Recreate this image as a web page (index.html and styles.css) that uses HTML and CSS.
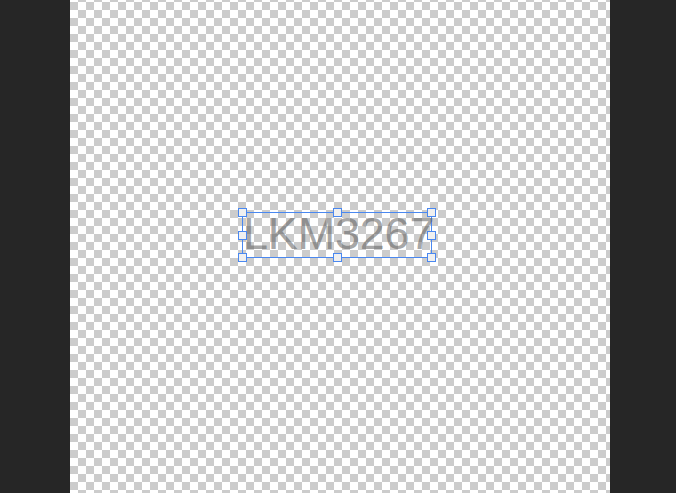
FILE: index.html
```html
<!DOCTYPE html>
<html>
<head>
    <meta charset="UTF-8">
    <meta name="viewport" content="width=device-width, initial-scale=1.0">
    <title>Canvas</title>
    <link rel="stylesheet" href="styles.css">
</head>
<body>
    <div class="workspace">
        <div class="side side-left"></div>
        <div class="canvas">
            <div class="layer">
                <span class="layer-text">LKM3267</span>
                <div class="handle h-tl"></div>
                <div class="handle h-tm"></div>
                <div class="handle h-tr"></div>
                <div class="handle h-ml"></div>
                <div class="handle h-mr"></div>
                <div class="handle h-bl"></div>
                <div class="handle h-bm"></div>
                <div class="handle h-br"></div>
            </div>
        </div>
        <div class="side side-right"></div>
    </div>
</body>
</html>
```

FILE: styles.css
```css
html, body {
    margin: 0;
    padding: 0;
    height: 100%;
    background: #262626;
    overflow: hidden;
}
.workspace {
    display: flex;
    height: 493px;
}
.side-left {
    width: 70px;
    flex-shrink: 0;
}
.side-right {
    flex: 1;
}
.canvas {
    position: relative;
    width: 540px;
    flex-shrink: 0;
    background: repeating-conic-gradient(#cccccc 0 25%, #ffffff 0 50%) 8px 2px / 16px 16px;
}
.layer {
    position: absolute;
    left: 172px;
    top: 212px;
    width: 190px;
    height: 46px;
    border: 1px solid #4a88f0;
    box-sizing: border-box;
}
.layer-text {
    display: block;
    font-family: "Liberation Sans", Arial, sans-serif;
    font-size: 45px;
    line-height: 42px;
    color: rgba(90, 90, 90, 0.55);
    white-space: nowrap;
    letter-spacing: -0.2px;
}
.handle {
    position: absolute;
    width: 9px;
    height: 9px;
    box-sizing: border-box;
    background: #f0f0f0;
    border: 1px solid #4a88f0;
}
.h-tl { left: -5px; top: -5px; }
.h-tm { left: 90px; top: -5px; }
.h-tr { right: -5px; top: -5px; }
.h-ml { left: -5px; top: 18px; }
.h-mr { right: -5px; top: 18px; }
.h-bl { left: -5px; bottom: -5px; }
.h-bm { left: 90px; bottom: -5px; }
.h-br { right: -5px; bottom: -5px; }
```
